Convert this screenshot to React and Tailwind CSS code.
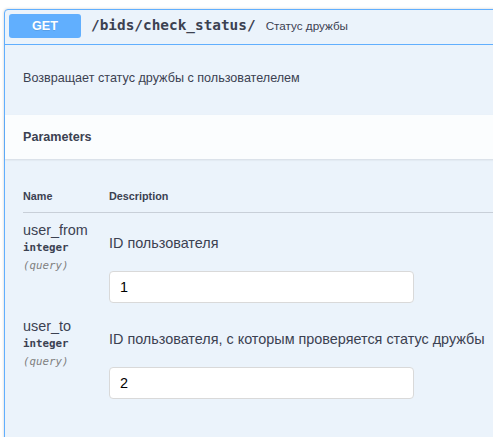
import React from 'react';

const sans = "font-['Liberation_Sans',Arial,sans-serif]";
const mono = "font-['DejaVu_Sans_Mono',monospace]";

const params = [
  {
    name: 'user_from',
    type: 'integer',
    where: '(query)',
    description: 'ID пользователя',
    value: '1',
  },
  {
    name: 'user_to',
    type: 'integer',
    where: '(query)',
    description: 'ID пользователя, с которым проверяется статус дружбы',
    value: '2',
  },
];

const ParamRow = ({ param }) => (
  <div className="flex pt-[8px] pb-[6px]">
    <div className="w-[86px] shrink-0">
      <div className="text-[14.4px] leading-[18px] text-[#3b4151]">{param.name}</div>
      <div className={`${mono} text-[10.8px] leading-[18px] font-bold text-[#3b4151]`}>
        {param.type}
      </div>
      <div className={`${mono} text-[10.8px] leading-[18px] italic text-[#808080]`}>
        {param.where}
      </div>
    </div>
    <div className="pt-[13px]">
      <p className="text-[14.4px] leading-[18px] text-[#3b4151] whitespace-nowrap">
        {param.description}
      </p>
      <input
        readOnly
        value={param.value}
        className="mt-[19px] w-[305px] h-[32px] bg-white border border-[#d9d9d9] rounded-[4px] pl-[10px] text-[14.4px] text-black outline-none"
      />
    </div>
  </div>
);

export default function App() {
  return (
    <div className={`${sans} w-[493px] h-[437px] overflow-hidden bg-white`}>
      <div className="ml-[4px] mt-[9px] w-[600px] border border-[#61affe] rounded-[4px] bg-[#ebf3fb] shadow-[0_0_3px_rgba(0,0,0,0.19)]">
        {/* summary */}
        <div className="flex items-start h-[35px] pt-[4px] pl-[4px] border-b border-[#61affe]">
          <div className="w-[72px] h-[24px] rounded-[3px] bg-[#61affe] flex items-center justify-center text-white font-bold text-[12.6px] [text-shadow:0_1px_0_rgba(0,0,0,0.1)]">
            GET
          </div>
          <div className="flex items-center h-[24px]">
            <span className={`${mono} px-[10px] text-[14.4px] font-bold text-[#3b4151]`}>
              /bids/check_status/
            </span>
            <span className="text-[11.7px] text-[#3b4151]">Статус дружбы</span>
          </div>
        </div>

        {/* description */}
        <div className="h-[70px] pt-[25px] pl-[18px]">
          <p className="text-[12.6px] leading-[16px] text-[#3b4151]">
            Возвращает статус дружбы с пользователелем
          </p>
        </div>

        {/* parameters header */}
        <div className="h-[44px] flex items-center px-[18px] bg-white/80 shadow-[0_1px_2px_rgba(0,0,0,0.1)]">
          <h4 className="text-[12.6px] font-bold text-[#3b4151]">Parameters</h4>
        </div>

        {/* table */}
        <div className="pl-[18px] pt-[29px] pb-[40px]">
          <div className="flex h-[25px] items-start border-b border-[#3b4151]/20 text-[10.8px] leading-[16px] font-bold text-[#3b4151]">
            <div className="w-[86px]">Name</div>
            <div>Description</div>
          </div>
          {params.map((p) => (
            <ParamRow key={p.name} param={p} />
          ))}
        </div>
      </div>
    </div>
  );
}
